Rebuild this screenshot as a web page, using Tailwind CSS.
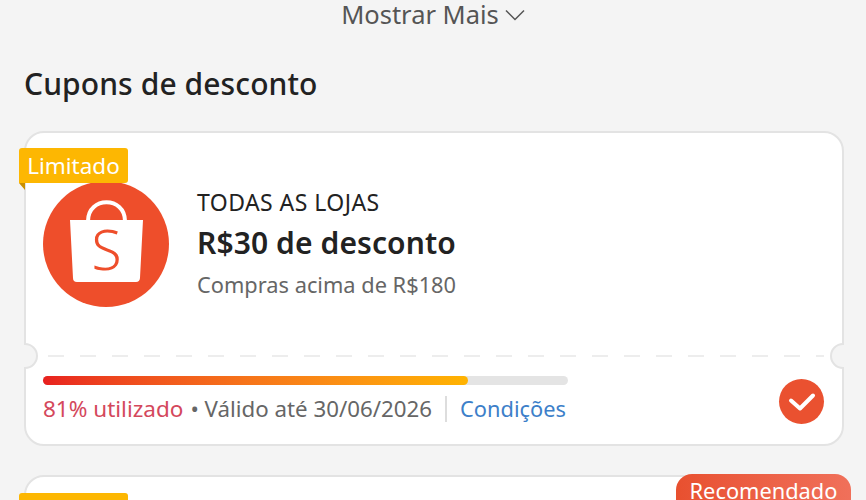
<!DOCTYPE html>
<html lang="pt-BR">
<head>
    <meta charset="UTF-8">
    <meta name="viewport" content="width=device-width, initial-scale=1.0">
    <title>Cupons de desconto</title>
    <script src="https://cdn.jsdelivr.net/npm/@tailwindcss/browser@4"></script>
</head>
<body class="bg-[#f4f4f4] font-['Noto_Sans',sans-serif]">
    <div class="h-[500px] overflow-hidden">
        <div class="h-[30px] flex items-center justify-center gap-[6px] text-[25.500px] leading-[28px] text-[#555]">
            <span class="-mt-[2px]">Mostrar Mais</span>
            <svg class="w-[20px] h-[12px]" viewBox="0 0 20 12" fill="none" stroke="#555" stroke-width="1.5"><path d="M1 1.5l9 9 9-9"/></svg>
        </div>
        <h2 class="mt-[34px] ml-[24px] h-[40px] leading-[40px] text-[30px] tracking-[0.1px] font-medium text-[#222]">Cupons de desconto</h2>

        <div class="relative mt-[27px] ml-[24px] w-[820px] h-[315px] bg-white border-2 border-[#e3e3e3] rounded-[20px]">
            <div class="absolute -left-[7px] top-[15px] w-[109px] h-[35px] flex items-center justify-center bg-[#fdb702] rounded-[3px] rounded-bl-none text-[22.500px] text-white">Limitado</div>
            <div class="absolute -left-[7px] top-[50px] w-0 h-0 border-t-[7px] border-l-[6px] border-t-[#c98f00] border-l-transparent"></div>

            <div class="flex items-center gap-[28px] pl-[17px] pt-[48px]">
                <div class="w-[126px] h-[126px] shrink-0 rounded-full bg-[#ee4e2b]">
                    <svg class="w-full h-full" viewBox="0 0 126 126">
                        <path d="M45 40c0-25 37-25 37 0" fill="none" stroke="#fff" stroke-width="4"/>
                        <path d="M27 39h73l-3 58q-.3 4-4 4H34q-4 0-4-4z" fill="#fff"/>
                        <text x="63.500" y="89" text-anchor="middle" font-size="55" font-weight="300" fill="#ee4e2b">S</text>
                    </svg>
                </div>
                <div>
                    <div class="h-[28px] leading-[28px] text-[23px] tracking-[0.45px] text-[#222]">TODAS AS LOJAS</div>
                    <div class="mt-[5px] h-[44px] leading-[44px] text-[30px] tracking-[0.1px] font-semibold text-[#222]">R$30 de desconto</div>
                    <div class="mt-[5px] h-[30px] leading-[30px] text-[21.800px] text-[#666]">Compras acima de R$180</div>
                </div>
            </div>

            <div class="absolute -left-[2px] top-[210px] w-[14px] h-[26px] overflow-hidden">
                <div class="-ml-[12px] w-[26px] h-[26px] rounded-full bg-[#f4f4f4] border-2 border-[#e3e3e3]"></div>
            </div>
            <div class="absolute -right-[2px] top-[210px] w-[14px] h-[26px] overflow-hidden">
                <div class="w-[26px] h-[26px] rounded-full bg-[#f4f4f4] border-2 border-[#e3e3e3]"></div>
            </div>
            <svg class="absolute left-[22px] top-[222px]" width="776" height="2"><line x1="0" y1="1" x2="776" y2="1" stroke="#e8e8e8" stroke-width="1.500" stroke-dasharray="16 16"/></svg>

            <div class="mt-[69px] ml-[17px] w-[525px] h-[9px] rounded-full bg-[#e4e4e4]">
                <div class="w-[425px] h-full rounded-full bg-gradient-to-r from-[#e8201f] to-[#ffb300]"></div>
            </div>
            <div class="mt-[9px] ml-[17px] h-[30px] flex items-center text-[22.300px]">
                <span class="text-[22.500px] text-[#d4485c]">81% utilizado</span>
                <span class="ml-[7px] text-[#666]">• Válido até 30/06/2026</span>
                <span class="ml-[13px] w-[2px] h-[26px] bg-[#ddd]"></span>
                <span class="ml-[13px] text-[21.800px] text-[#3d7fc9]">Condições</span>
            </div>
            <div class="absolute left-[753px] top-[246px] w-[45px] h-[45px] rounded-full bg-[#ea5130] flex items-center justify-center">
                <svg width="28" height="20" viewBox="0 0 28 20" fill="none" stroke="#fff" stroke-width="4" stroke-linecap="round" stroke-linejoin="round"><path d="M3 8.500l9 8L25 3.500"/></svg>
            </div>
        </div>

        <div class="relative mt-[29px] ml-[24px] w-[820px] h-[100px] bg-white border-2 border-[#e3e3e3] rounded-[20px]">
            <div class="absolute -left-[7px] top-[16px] w-[109px] h-[35px] bg-[#fdb702] rounded-[3px]"></div>
            <div class="absolute -right-[9px] -top-[3px] w-[175px] h-[30px] leading-[33px] text-center rounded-t-[16px] bg-gradient-to-r from-[#e8502f] to-[#f0705a] text-[21.800px] text-white">Recomendado</div>
        </div>
    </div>
</body>
</html>
